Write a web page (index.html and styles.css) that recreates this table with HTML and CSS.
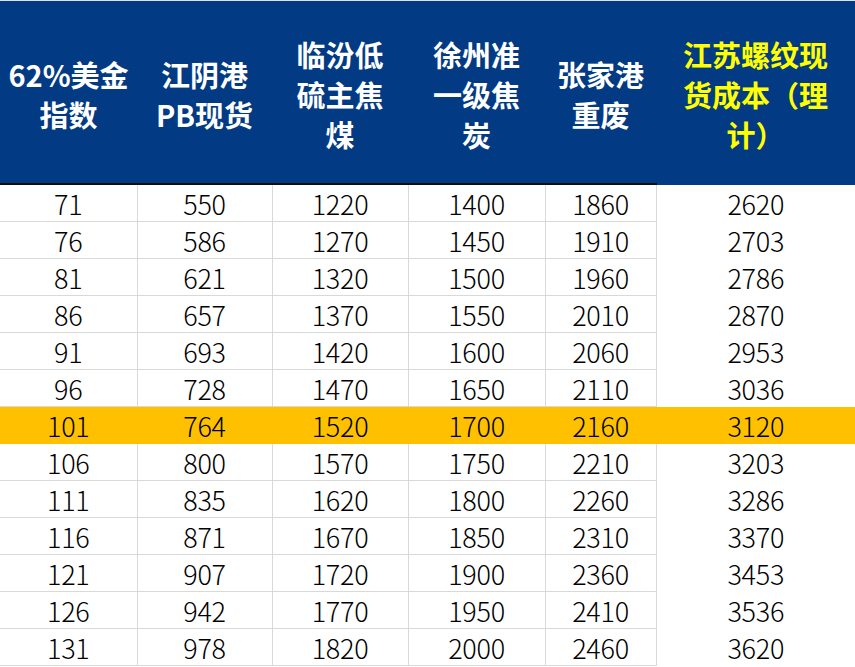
FILE: index.html
```html
<!DOCTYPE html>
<html lang="zh-CN">
<head>
<meta charset="utf-8">
<title>成本表</title>
<link rel="stylesheet" href="styles.css">
</head>
<body>
<div class="sheet">
<table class="grid">
<colgroup>
<col class="c1"><col class="c2"><col class="c3"><col class="c4"><col class="c5"><col class="c6">
</colgroup>
<thead>
<tr>
<th>62%美金<br>指数</th>
<th>江阴港<br>PB现货</th>
<th>临汾低<br>硫主焦<br>煤</th>
<th>徐州准<br>一级焦<br>炭</th>
<th>张家港<br>重废</th>
<th class="cost">江苏螺纹现<br>货成本（理<br>计）</th>
</tr>
</thead>
<tbody>
<tr><td>71</td><td>550</td><td>1220</td><td>1400</td><td>1860</td><td class="cost">2620</td></tr>
<tr><td>76</td><td>586</td><td>1270</td><td>1450</td><td>1910</td><td class="cost">2703</td></tr>
<tr><td>81</td><td>621</td><td>1320</td><td>1500</td><td>1960</td><td class="cost">2786</td></tr>
<tr><td>86</td><td>657</td><td>1370</td><td>1550</td><td>2010</td><td class="cost">2870</td></tr>
<tr><td>91</td><td>693</td><td>1420</td><td>1600</td><td>2060</td><td class="cost">2953</td></tr>
<tr><td>96</td><td>728</td><td>1470</td><td>1650</td><td>2110</td><td class="cost">3036</td></tr>
<tr class="hl"><td>101</td><td>764</td><td>1520</td><td>1700</td><td>2160</td><td class="cost">3120</td></tr>
<tr><td>106</td><td>800</td><td>1570</td><td>1750</td><td>2210</td><td class="cost">3203</td></tr>
<tr><td>111</td><td>835</td><td>1620</td><td>1800</td><td>2260</td><td class="cost">3286</td></tr>
<tr><td>116</td><td>871</td><td>1670</td><td>1850</td><td>2310</td><td class="cost">3370</td></tr>
<tr><td>121</td><td>907</td><td>1720</td><td>1900</td><td>2360</td><td class="cost">3453</td></tr>
<tr><td>126</td><td>942</td><td>1770</td><td>1950</td><td>2410</td><td class="cost">3536</td></tr>
<tr><td>131</td><td>978</td><td>1820</td><td>2000</td><td>2460</td><td class="cost">3620</td></tr>
</tbody>
</table>
</div>
</body>
</html>
```
FILE: styles.css
```css
html, body {
  margin: 0;
  padding: 0;
  background: #ffffff;
}

.sheet {
  width: 855px;
  border-top: 1px solid #e2e2e2;
}

.grid {
  width: 855px;
  border-collapse: collapse;
  table-layout: fixed;
  font-family: "Noto Sans CJK SC", "Noto Sans", sans-serif;
}

.c1 { width: 137px; }
.c2 { width: 135px; }
.c3 { width: 136px; }
.c4 { width: 137px; }
.c5 { width: 111px; }
.c6 { width: 199px; }

.grid th {
  background: #023a84;
  color: #ffffff;
  font-weight: 700;
  font-size: 29px;
  line-height: 40px;
  height: 183px;
  padding: 3px 0 0;
  box-sizing: border-box;
  text-align: center;
  vertical-align: middle;
  border-bottom: 2px solid #0d0d0d;
}

.grid th.cost {
  color: #ffff00;
  border-bottom-color: #023a84;
}

.grid td {
  height: 37px;
  padding: 2px 0 0;
  box-sizing: border-box;
  text-align: center;
  vertical-align: middle;
  font-size: 27px;
  font-weight: 300;
  letter-spacing: -0.3px;
  line-height: 34px;
  color: #000000;
  border-right: 1px solid #d9d9d9;
  border-bottom: 1px solid #d9d9d9;
}

.grid td.cost {
  border-right: 0;
  border-bottom: 0;
}

.grid tr.hl td {
  background: #ffc000;
  border-bottom-color: #ffc000;
  border-right-color: #ffc000;
}
```
